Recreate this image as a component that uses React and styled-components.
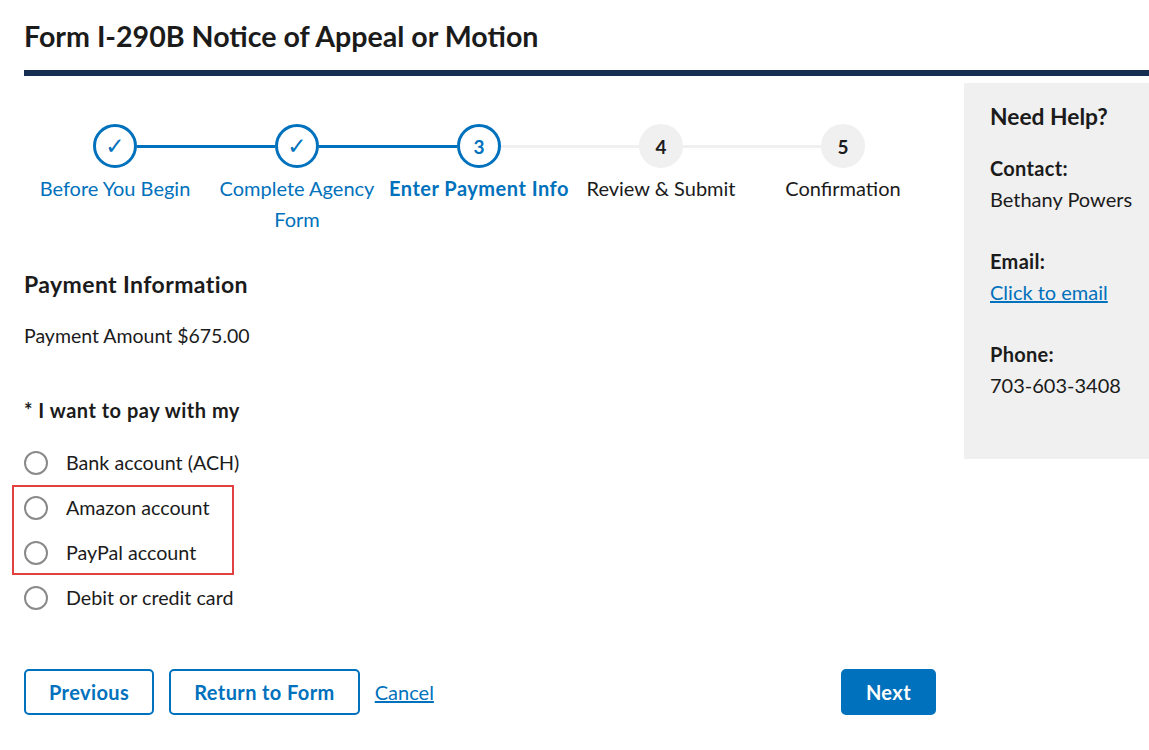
import styled, { createGlobalStyle } from 'styled-components';

const Global = createGlobalStyle`
  body {
    margin: 0;
    background: #fff;
    font-family: Lato, "Source Sans Pro", "Noto Sans", sans-serif;
    color: #1b1b1b;
  }
`;

const BLUE = '#0071bc';

const Page = styled.div`
  padding-left: 24px;
  overflow: hidden;
`;

const Title = styled.h1`
  margin: 0;
  padding-top: 19px;
  font-size: 28.6px;
  line-height: 34px;
  font-weight: 700;
`;

const Rule = styled.div`
  margin-top: 17px;
  height: 6px;
  background: #162e51;
`;

const Layout = styled.div`
  display: flex;
  gap: 28px;
  margin-top: 7px;
`;

const Main = styled.div`
  width: 912px;
`;

const Stepper = styled.ol`
  display: grid;
  grid-template-columns: repeat(5, 182px);
  list-style: none;
  margin: 41px 0 0;
  padding: 0;
`;

const Step = styled.li`
  display: flex;
  flex-direction: column;
  align-items: center;
`;

const CircleRow = styled.div`
  display: flex;
  align-items: center;
  width: 100%;
`;

const Segment = styled.span`
  flex: 1;
  height: 3px;
  background: ${p => p.$color || 'transparent'};
`;

const Circle = styled.span`
  box-sizing: border-box;
  width: 44px;
  height: 44px;
  border-radius: 50%;
  display: flex;
  align-items: center;
  justify-content: center;
  font-size: 19px;
  font-weight: 700;
  border: 3px solid ${p => (p.$state === 'todo' ? '#f0f0f0' : BLUE)};
  background: ${p => (p.$state === 'todo' ? '#f0f0f0' : '#fff')};
  color: ${p => (p.$state === 'todo' ? '#1b1b1b' : BLUE)};
`;

const Check = styled.span`
  font-family: "DejaVu Sans", sans-serif;
  font-weight: 400;
  font-size: 23px;
  line-height: 1;
`;

const StepLabel = styled.span`
  margin-top: 5px;
  font-size: 20px;
  line-height: 31px;
  text-align: center;
  font-weight: ${p => (p.$state === 'current' ? 700 : 400)};
  letter-spacing: ${p => (p.$state === 'current' ? '0.5px' : '0')};
  color: ${p => (p.$state === 'todo' ? '#1b1b1b' : BLUE)};
`;

const Heading = styled.h2`
  margin: 35px 0 0;
  font-size: 23px;
  line-height: 29px;
  letter-spacing: 0.4px;
  font-weight: 700;
`;

const Text = styled.p`
  margin: 23px 0 0;
  font-size: 19.5px;
  line-height: 28px;
`;

const Legend = styled.div`
  margin-top: 46px;
  font-size: 20px;
  line-height: 28px;
  letter-spacing: 0.5px;
  font-weight: 700;
`;

const Options = styled.div`
  margin-top: 16px;
`;

const Highlight = styled.div`
  width: 222px;
  margin-left: -12px;
  padding-left: 12px;
  box-sizing: border-box;
  outline: 2px solid #e2423f;
  outline-offset: -2px;
`;

const Option = styled.label`
  display: flex;
  align-items: center;
  gap: 18px;
  height: 45px;
  font-size: 19.7px;
  cursor: pointer;
`;

const Radio = styled.span`
  box-sizing: border-box;
  width: 24px;
  height: 24px;
  border-radius: 50%;
  border: 2px solid #8a8a8a;
  background: #fff;
  flex-shrink: 0;
`;

const Actions = styled.div`
  display: flex;
  align-items: center;
  gap: 15px;
  margin-top: 49px;
`;

const Button = styled.button`
  box-sizing: border-box;
  height: 46px;
  padding: 0 23px;
  border-radius: 5px;
  border: 2px solid ${BLUE};
  background: ${p => (p.$primary ? BLUE : '#fff')};
  color: ${p => (p.$primary ? '#fff' : BLUE)};
  font-family: inherit;
  font-size: 20px;
  letter-spacing: 0.4px;
  font-weight: 700;
  cursor: pointer;
  ${p => p.$primary && 'margin-left: auto;'}
`;

const LinkText = styled.a`
  color: ${BLUE};
  text-decoration: underline;
  font-size: 20px;
  cursor: pointer;
`;

const Sidebar = styled.aside`
  box-sizing: border-box;
  width: 185px;
  height: 376px;
  padding: 19px 0 0 26px;
  background: #f0f0f0;
  flex-shrink: 0;
`;

const SideTitle = styled.h3`
  margin: 0;
  font-size: 22.8px;
  line-height: 28px;
  font-weight: 700;
`;

const Group = styled.div`
  margin-top: ${p => (p.$first ? 23 : 31)}px;
  font-size: 20px;
  line-height: 31px;
`;

const Label = styled.div`
  font-weight: 700;
  letter-spacing: 0.3px;
`;

const steps = [
  { n: 1, label: 'Before You Begin', state: 'done', left: null, right: BLUE },
  { n: 2, label: 'Complete Agency Form', state: 'done', left: BLUE, right: BLUE },
  { n: 3, label: 'Enter Payment Info', state: 'current', left: BLUE, right: '#f0f0f0' },
  { n: 4, label: 'Review & Submit', state: 'todo', left: '#f0f0f0', right: '#f0f0f0' },
  { n: 5, label: 'Confirmation', state: 'todo', left: '#f0f0f0', right: null },
];

function Opt({ children }) {
  return (
    <Option>
      <Radio />
      {children}
    </Option>
  );
}

export default function App() {
  return (
    <Page>
      <Global />
      <Title>Form I-290B Notice of Appeal or Motion</Title>
      <Rule />
      <Layout>
        <Main>
          <Stepper>
            {steps.map(s => (
              <Step key={s.n}>
                <CircleRow>
                  <Segment $color={s.left} />
                  <Circle $state={s.state}>
                    {s.state === 'done' ? <Check>✓</Check> : s.n}
                  </Circle>
                  <Segment $color={s.right} />
                </CircleRow>
                <StepLabel $state={s.state}>
                  {s.n === 2 ? <>Complete Agency<br />Form</> : s.label}
                </StepLabel>
              </Step>
            ))}
          </Stepper>

          <Heading>Payment Information</Heading>
          <Text>Payment Amount $675.00</Text>
          <Legend>* I want to pay with my</Legend>
          <Options>
            <Opt>Bank account (ACH)</Opt>
            <Highlight>
              <Opt>Amazon account</Opt>
              <Opt>PayPal account</Opt>
            </Highlight>
            <Opt>Debit or credit card</Opt>
          </Options>

          <Actions>
            <Button>Previous</Button>
            <Button>Return to Form</Button>
            <LinkText>Cancel</LinkText>
            <Button $primary>Next</Button>
          </Actions>
        </Main>

        <Sidebar>
          <SideTitle>Need Help?</SideTitle>
          <Group $first>
            <Label>Contact:</Label>
            <div>Bethany Powers</div>
          </Group>
          <Group>
            <Label>Email:</Label>
            <div>
              <LinkText>Click to email</LinkText>
            </div>
          </Group>
          <Group>
            <Label>Phone:</Label>
            <div>703-603-3408</div>
          </Group>
        </Sidebar>
      </Layout>
    </Page>
  );
}
